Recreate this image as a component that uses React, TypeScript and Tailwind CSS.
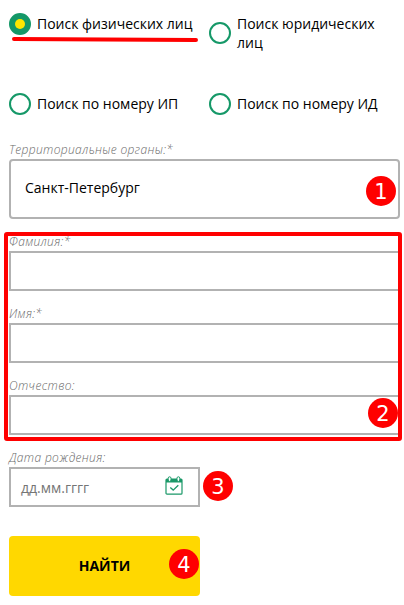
import { useState } from 'react';
import clsx from 'clsx';

const searchTypes = [
  { id: 'person', label: 'Поиск физических лиц' },
  { id: 'company', label: 'Поиск юридических лиц' },
  { id: 'ip', label: 'Поиск по номеру ИП' },
  { id: 'id', label: 'Поиск по номеру ИД' },
];

const nameFields = [
  { name: 'lastName', label: 'Фамилия:*' },
  { name: 'firstName', label: 'Имя:*' },
  { name: 'patronymic', label: 'Отчество:' },
];

function Badge({ value, className }: { value: number; className?: string }) {
  return (
    <span
      className={clsx(
        'flex h-[30px] w-[30px] shrink-0 items-center justify-center rounded-full bg-[#ff0000] pt-[2px] font-["DejaVu_Sans",sans-serif] text-[21px] font-normal leading-none text-white',
        className
      )}
    >
      {value}
    </span>
  );
}

function FieldLabel({ children }: { children: string }) {
  return <span className="block h-[18px] whitespace-nowrap text-[12px] font-light italic leading-[17px] tracking-[0.35px] text-[#6b6b6b]">{children}</span>;
}

function CalendarIcon() {
  return (
    <svg width="18" height="19" viewBox="0 0 18 19" fill="none">
      <rect x="1" y="3" width="16" height="15.2" rx="1" stroke="#1a9868" strokeWidth="1.2" />
      <path d="M1 3H17V6.5H1Z" fill="#1a9868" />
      <rect x="3.2" y="0.8" width="2.8" height="4.6" rx="1.4" fill="#fff" stroke="#1a9868" />
      <rect x="12" y="0.8" width="2.8" height="4.6" rx="1.4" fill="#fff" stroke="#1a9868" />
      <path d="M5.3 11.4L8.2 14.1L13.3 9.3" stroke="#1a9868" strokeWidth="1.3" />
    </svg>
  );
}

export default function App() {
  const [searchType, setSearchType] = useState('person');

  return (
    <div className='h-[605px] w-[404px] overflow-hidden bg-white pl-[9px] font-["Open_Sans",sans-serif] text-black'>
      <div className="relative grid h-[141px] grid-cols-[200px_180px] grid-rows-[39px_22px] content-start items-center gap-y-[41px] pt-[13px]">
        {searchTypes.map((type) => (
          <button
            key={type.id}
            type="button"
            onClick={() => setSearchType(type.id)}
            className={clsx('flex items-center gap-[6px] text-left', type.id === 'person' && 'self-start')}
          >
            <span
              className={clsx(
                'flex h-[22px] w-[22px] shrink-0 items-center justify-center rounded-full border-2 border-[#159868]',
                type.id === searchType && 'bg-[#159868]'
              )}
            >
              {type.id === searchType && <span className="h-[10px] w-[10px] rounded-full bg-[#ffe600]" />}
            </span>
            <span className={clsx('text-[14px] leading-[19px]', type.id !== 'company' && 'pb-px')}>{type.label}</span>
          </button>
        ))}
        <svg width="190" height="8" className="absolute left-[2px] top-[35px]">
          <path d="M3 4L185 5" stroke="#ff0000" strokeWidth="4" strokeLinecap="round" />
        </svg>
      </div>

      <FieldLabel>Территориальные органы:*</FieldLabel>
      <div className="flex h-[60px] w-[391px] items-center justify-between rounded-[4px] border-2 border-[#b2b2b2] pl-[14px] pr-[2px] text-[14px]">
        <span className="pb-1">Санкт-Петербург</span>
        <Badge value={1} className="mt-1" />
      </div>

      <div className="relative -ml-[5px] mt-[13px] flex h-[209px] w-[398px] flex-col gap-[14px] rounded-[3px] border-4 border-[#ff0000] pl-px">
        {nameFields.map((field) => (
          <div key={field.name} className="-mt-[3px] pb-[3px]">
            <FieldLabel>{field.label}</FieldLabel>
            <input name={field.name} className="block h-[40px] w-full border-2 border-r-0 border-[#b2b2b2] outline-none" />
          </div>
        ))}
        <Badge value={2} className="absolute right-0 top-[162px]" />
      </div>

      <div className="mt-[8px]">
        <FieldLabel>Дата рождения:</FieldLabel>
        <div className="flex items-center gap-[3px]">
          <div className="flex h-[40px] w-[191px] items-center justify-between border-2 border-[#b2b2b2] pl-[10px] pr-[15px] text-[14px] text-[#757575]">
            <span>дд.мм.гггг</span>
            <span className="pb-[3px]">
              <CalendarIcon />
            </span>
          </div>
          <Badge value={3} className="mb-[2px]" />
        </div>
      </div>

      <button type="button" className="relative mt-[29px] flex h-[60px] w-[191px] items-center justify-center rounded-[4px] bg-[#ffd800] pb-[2px] text-[14px] font-bold">
        НАЙТИ
        <Badge value={4} className="absolute right-px top-[13px]" />
      </button>
    </div>
  );
}
